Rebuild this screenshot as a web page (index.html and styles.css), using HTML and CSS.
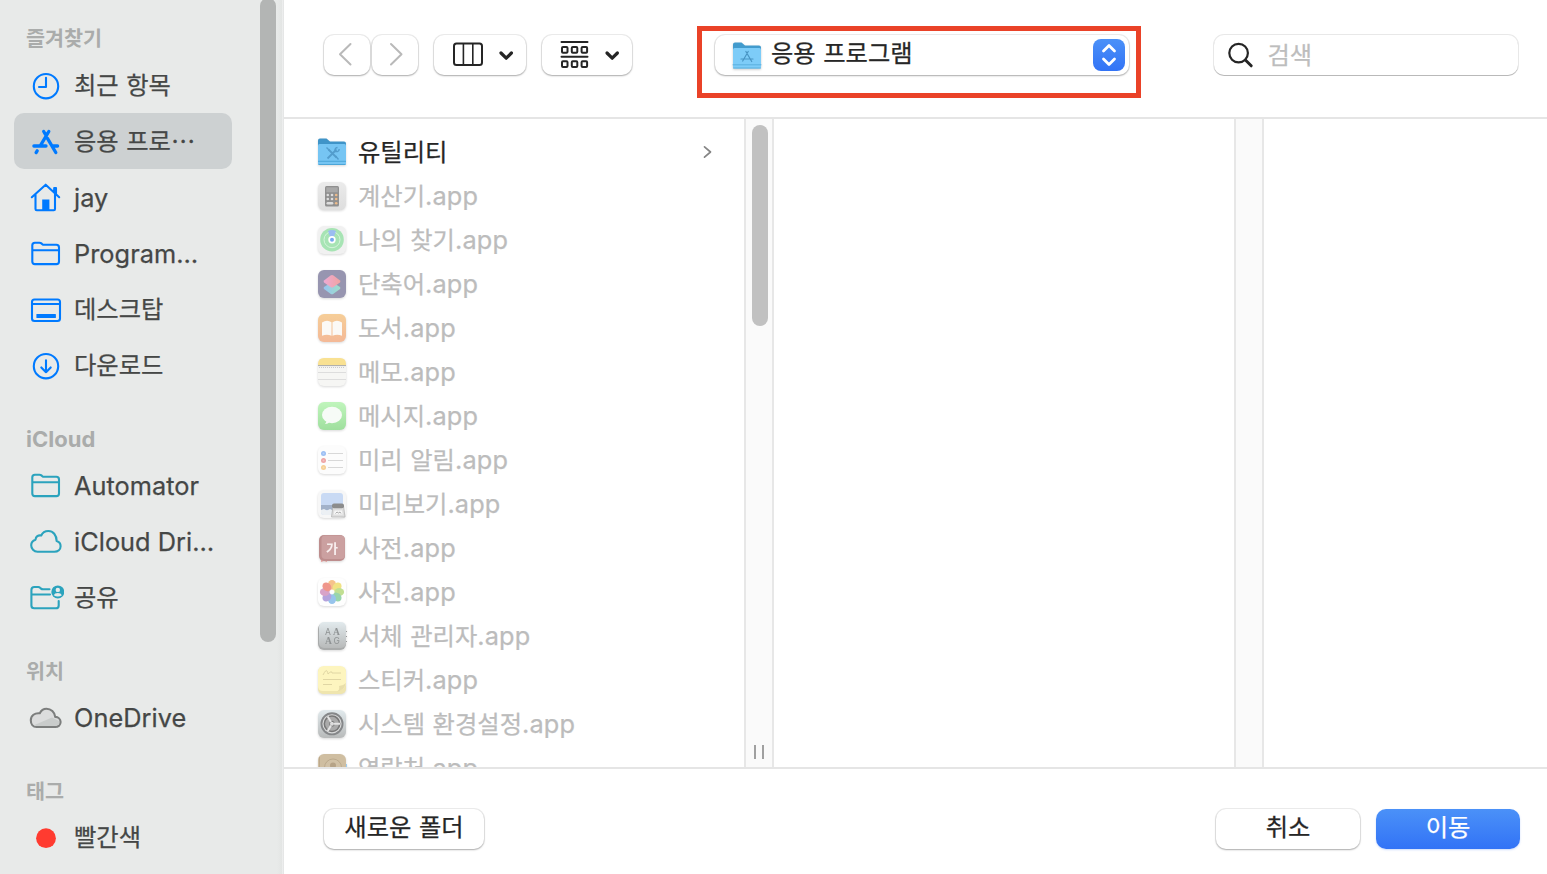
FILE: index.html
```html
<!DOCTYPE html>
<html lang="ko">
<head>
<meta charset="utf-8">
<title>응용 프로그램</title>
<link rel="stylesheet" href="styles.css">
</head>
<body>
<div class="dialog">
  <aside class="sidebar">
    <h2 class="heading first">즐겨찾기</h2>
    <div class="place"><svg class="glyph blue" viewBox="0 0 36 36"><circle cx="18" cy="18.200" r="12.200"/><path d="M18 9.800V19h-7"/></svg><span>최근 항목</span></div>
    <div class="place selected"><svg class="glyph blue heavy" viewBox="0 0 36 36"><path d="M20.800 7.500L12.400 21.600M15.700 7.500l2.200 3.600M19.600 14.600l8.200 13.900M5.900 22H18M24.400 22h5.200M9.200 26.800l-1.100 1.800"/></svg><span>응용 프로⋯</span></div>
    <div class="place"><svg class="glyph blue" viewBox="0 0 36 36"><path d="M3.800 17.200L17.700 4.700l13.500 12.500M7.500 14.500v14.500q0 1.200 1.200 1.200h17.100q1.200 0 1.200-1.200V14.500M26.200 12.500V8h1.800v6.500"/><path class="solid" d="M14.200 19.500h7.200v10.500h-7.200z"/></svg><span class="latin">jay</span></div>
    <div class="place"><svg class="glyph blue" viewBox="0 0 36 36"><path d="M4.300 25.500V9.300q0-2.600 2.600-2.600h4.600q1.100 0 1.900.7l.9.800q.7.600 1.800.600h12.300q2.600 0 2.600 2.600v14.100q0 2.600-2.600 2.600H6.900q-2.600 0-2.600-2.600zM4.300 14.200H31"/></svg><span class="latin">Program…</span></div>
    <div class="place"><svg class="glyph blue" viewBox="0 0 36 36"><rect x="4" y="7.500" width="28" height="21.500" rx="2.500"/><path d="M4.200 12h27.500"/><rect class="solid" x="8.400" y="22" width="19.500" height="4" rx=".6"/></svg><span>데스크탑</span></div>
    <div class="place"><svg class="glyph blue" viewBox="0 0 36 36"><circle cx="18" cy="18.200" r="12.200"/><path d="M18 12.200v12M13.300 19.400l4.700 4.800 4.700-4.800"/></svg><span>다운로드</span></div>

    <h2 class="heading latin-heading">iCloud</h2>
    <div class="place"><svg class="glyph teal" viewBox="0 0 36 36"><path d="M4.300 25.500V9.300q0-2.600 2.600-2.600h4.600q1.100 0 1.900.7l.9.800q.7.600 1.800.600h12.300q2.600 0 2.600 2.600v14.100q0 2.600-2.600 2.600H6.900q-2.600 0-2.600-2.600zM4.300 14.200H31"/></svg><span class="latin">Automator</span></div>
    <div class="place"><svg class="glyph teal" viewBox="0 0 36 36"><path d="M9.500 27.700h16.900c3.600 0 6.200-2.400 6.200-5.400 0-2.600-1.700-4.500-3.900-5.200C28.500 11 25.100 7 20.400 7c-3.300 0-6 1.700-7.200 4.500-3-.7-5.500 1.200-5.700 4.200-2.600.8-4.300 3-4.300 5.600 0 3.600 2.700 6.400 6.300 6.400z"/></svg><span class="latin">iCloud Dri…</span></div>
    <div class="place"><svg class="glyph teal" viewBox="0 0 36 36"><path d="M21.500 9.300h-6.500q-1.200 0-2-.7l-.9-.8Q11.300 7 10.300 7H6.300q-2.900 0-2.900 2.900v15.600q0 2.800 2.800 2.800h21.500q3 0 3-2.900V21M3.500 14.500h18.500"/><circle class="solid" cx="29.800" cy="11.900" r="6.500"/><circle class="hole" cx="29.800" cy="9.900" r="2.200"/><path class="hole" d="M25.700 15.300q1-2.400 4.100-2.400t4.100 2.400q-4.100 2.500-8.200 0z"/></svg><span>공유</span></div>

    <h2 class="heading">위치</h2>
    <div class="place"><svg class="glyph gray" viewBox="0 0 36 36"><path class="cloud" d="M8.500 27h18.700c3.100 0 5.400-2 5.400-4.900 0-3-2.300-5.100-5.400-5.200-.5-4.700-4.200-8.100-8.700-8.100-3.200 0-5.400 1.700-6.700 4.500-5-.7-9 2.300-9 6.900 0 4 2.200 6.800 5.700 6.800z"/><path class="shade" d="M6.500 25l17.500-7.500 7 3.500v3l-3 2H8z"/></svg><span class="latin">OneDrive</span></div>

    <h2 class="heading">태그</h2>
    <div class="place"><svg class="glyph" viewBox="0 0 36 36"><circle cx="18" cy="18.200" r="9.900" fill="#ff3b30"/></svg><span>빨간색</span></div>
    <div class="sidebar-thumb"></div>
  </aside>

  <main class="main">
    <header class="toolbar">
      <div class="button nav"><svg viewBox="0 0 46 40"><path d="M26.500 9L16 19.300 26.500 29.500"/></svg></div>
      <div class="button nav forward"><svg viewBox="0 0 46 40"><path d="M19 9l10.500 10.300L19 29.500"/></svg></div>
      <div class="button view"><svg viewBox="0 0 92 40"><rect x="20" y="8.500" width="28" height="21.500" rx="2.500"/><path class="fine" d="M29.400 9v21M38.800 9v21"/><path class="chevron" d="M67 18l5.200 5.200 5.200-5.200"/></svg></div>
      <div class="button group"><svg viewBox="0 0 90 40"><path d="M19.500 7h26M19.500 21.700h26"/><g><rect x="20" y="11.900" width="5.500" height="5.800" rx="1"/><rect x="29.800" y="11.900" width="5.500" height="5.800" rx="1"/><rect x="39.600" y="11.900" width="5.500" height="5.800" rx="1"/><rect x="20" y="26.300" width="5.500" height="5.800" rx="1"/><rect x="29.800" y="26.300" width="5.500" height="5.800" rx="1"/><rect x="39.600" y="26.300" width="5.500" height="5.800" rx="1"/></g><path class="chevron" d="M65 18l5.200 5.200 5.200-5.200"/></svg></div>
      <div class="button popup">
        <svg class="app" viewBox="0 0 32 32"><path d="M2 5.500q0-2 2-2h6.500l3.500 3h14q2 0 2 2V15H2z" fill="#429bcd"/><rect x="2" y="9" width="28" height="20.500" rx="1.500" fill="#7dccf8"/><path d="M2 25.800h28M2.500 29h27" stroke="#5ab0de" stroke-width="1"/><path d="M17.200 12.500l-5.500 9.500M14.900 12.500l5.800 10M10 20h12" fill="none" stroke="#4895c4" stroke-width="1.200"/></svg>
        <span>응용 프로그램</span>
        <svg class="stepper" viewBox="0 0 32 32"><path d="M10.500 12l5.500-5.500 5.500 5.500M10.500 20l5.500 5.500 5.500-5.500"/></svg>
        <div class="callout"></div>
      </div>
      <div class="button search"><svg viewBox="0 0 32 40"><circle cx="12.600" cy="18.100" r="9.300"/><path class="handle" d="M19.400 25l5.800 5.800"/></svg><span>검색</span></div>
    </header>

    <section class="columns">
      <div class="column files">
        <div class="file folder"><svg class="app" viewBox="0 0 32 32"><path d="M2 4.500q0-2 2-2h6.500l3.500 3h14q2 0 2 2V14H2z" fill="#3f94c8"/><rect x="2" y="8" width="28" height="21" rx="1.500" fill="#76c5f3"/><path d="M2 25.300h28M2.500 28.500h27" stroke="#4da6d8" stroke-width="1"/><path d="M12.500 13.500l8 8M20.500 13.500l-9 9" stroke="#539dcd" stroke-width="1.800"/><path d="M10.500 11.500l3 3M19 15.500q-.7-3.500 2.500-4M19.200 15.500q3.800.7 4-2.500M19.500 20l3 3.500" fill="none" stroke="#539dcd" stroke-width="1.400"/></svg><span>유틸리티</span><svg class="disclosure" viewBox="0 0 12 16"><path d="M2.500 2.800L8.500 8l-6 5.200"/></svg></div>
        <div class="file"><svg class="app" viewBox="0 0 32 32"><defs><linearGradient id="silver" x2="0" y2="1"><stop stop-color="#ebebeb"/><stop offset="1" stop-color="#dedede"/></linearGradient></defs><rect x="2" y="2" width="28" height="28" rx="6" fill="url(#silver)"/><rect x="9" y="6" width="14" height="20.500" rx="1.500" fill="#909090"/><rect x="10.300" y="7.300" width="11.400" height="5" fill="#a9a9a9"/><g fill="#ddd"><circle cx="11.800" cy="15" r="1.300"/><circle cx="16" cy="15" r="1.300"/><circle cx="11.800" cy="19" r="1.300"/><circle cx="16" cy="19" r="1.300"/><rect x="10.500" y="22" width="6.800" height="2.500" rx="1.200"/></g><g fill="#eebb8a"><circle cx="20.200" cy="15" r="1.300"/><circle cx="20.200" cy="19" r="1.300"/><circle cx="20.200" cy="23.200" r="1.300"/></g></svg><span>계산기<b class="latin">.app</b></span></div>
        <div class="file"><svg class="app" viewBox="0 0 32 32"><rect x="2" y="2" width="28" height="28" rx="6" fill="#f1f1f1"/><circle cx="16" cy="15.700" r="11.800" fill="#a7e4b4"/><circle cx="16" cy="15.700" r="8" fill="none" stroke="#d5f4dc"/><path d="M12 7q4-2 8 0l-2.500 7h-3z" fill="#9bbdf1"/><circle cx="16" cy="15.700" r="3.700" fill="#fff"/><circle cx="16" cy="15.700" r="2" fill="#76a8ef"/></svg><span>나의 찾기<b class="latin">.app</b></span></div>
        <div class="file"><svg class="app" viewBox="0 0 32 32"><defs><linearGradient id="shortTop"><stop stop-color="#edaad4"/><stop offset="1" stop-color="#f1a3a1"/></linearGradient><linearGradient id="shortLow"><stop stop-color="#98c4f2"/><stop offset="1" stop-color="#9edec7"/></linearGradient></defs><rect x="2" y="2" width="28" height="28" rx="6" fill="#9795b0"/><path d="M8 19l8-5 8 5q.8 1 0 2l-6.500 4.700q-1.500 1-3 0L8 21q-.8-1 0-2z" fill="url(#shortLow)"/><path d="M8 12.500l6.500-5q1.500-1 3 0l6.500 5q.8 1 0 2L17.500 19q-1.500 1-3 0L8 14.500q-.8-1 0-2z" fill="url(#shortTop)"/></svg><span>단축어<b class="latin">.app</b></span></div>
        <div class="file"><svg class="app" viewBox="0 0 32 32"><defs><linearGradient id="books" x2="0" y2="1"><stop stop-color="#f6ce98"/><stop offset="1" stop-color="#f4b997"/></linearGradient></defs><rect x="2" y="2" width="28" height="28" rx="6" fill="url(#books)"/><path d="M6 10.500q5-3.500 9.500-.3v13.500q-4.500-2-9.500 0zM16.500 10.200q4.500-3.200 9.500.3v13.200q-5-2-9.500 0z" fill="#fbf9f6"/></svg><span>도서<b class="latin">.app</b></span></div>
        <div class="file"><svg class="app" viewBox="0 0 32 32"><rect x="2" y="2" width="28" height="28" rx="6" fill="#f6f6f4"/><path d="M2 9.500V8q0-6 6-6h16q6 0 6 6v1.500z" fill="#f9e192"/><path d="M2 9.600h28" stroke="#aaa"/><path d="M3 11.500h26" stroke="#ccc" stroke-dasharray="1 1"/><path d="M2 16.500h28M2 23.500h28" stroke="#ddd"/></svg><span>메모<b class="latin">.app</b></span></div>
        <div class="file"><svg class="app" viewBox="0 0 32 32"><defs><linearGradient id="mint" x2="0" y2="1"><stop stop-color="#c0f5bc"/><stop offset="1" stop-color="#9fdf9e"/></linearGradient></defs><rect x="2" y="2" width="28" height="28" rx="6" fill="url(#mint)"/><ellipse cx="16" cy="15" rx="10" ry="8.200" fill="#f7fbf7"/><path d="M10.500 20q.3 2.500-1.500 4 3 0 5-2.500" fill="#f7fbf7"/></svg><span>메시지<b class="latin">.app</b></span></div>
        <div class="file"><svg class="app" viewBox="0 0 32 32"><rect x="2" y="2" width="28" height="28" rx="6" fill="#fcfcfc"/><path d="M12 9.500h15M12 16.500h15M12 23.500h15" stroke="#d8d8d8"/><circle cx="7.500" cy="9.500" r="2.500" fill="#9bbff4"/><circle cx="7.500" cy="16.500" r="2.500" fill="#eea5a5"/><circle cx="7.500" cy="23.500" r="2.500" fill="#f6cf94"/><g fill="#fff" opacity=".3"><circle cx="7.500" cy="9.500" r="1"/><circle cx="7.500" cy="16.500" r="1"/><circle cx="7.500" cy="23.500" r="1"/></g></svg><span>미리 알림<b class="latin">.app</b></span></div>
        <div class="file"><svg class="app" viewBox="0 0 32 32"><rect x="2" y="2" width="28" height="28" rx="6" fill="#f7f7f7"/><rect x="5" y="5" width="22" height="22" rx="3" fill="#c9daf4"/><path d="M5 17h22v5H5z" fill="#a3b2c9"/><path d="M5 22l3-1 3 1.500 3-1.500 4 2v4H8q-3 0-3-3z" fill="#ecf0f4"/><path d="M17 18h10.500l1.500 11H15.500z" fill="#dedede" stroke="#b5b5b5" stroke-width=".8"/><rect x="16" y="15.500" width="12" height="4.800" rx="2" fill="#8c8c8c"/><path d="M18.500 22.500h7.500l.7 4h-9z" fill="#f6f6f6"/><path d="M19.500 25.500l1.500-1.500 1.500 1 1.500-1 1 1.500" fill="none" stroke="#999" stroke-width=".8"/></svg><span>미리보기<b class="latin">.app</b></span></div>
        <div class="file"><svg class="app" viewBox="0 0 32 32"><path d="M5 26h6v4l-3-1-3 1z" fill="#e7a19e"/><rect x="3" y="3" width="26" height="26" rx="5" fill="#bd8d8d"/><rect x="5.500" y="3.500" width="23.300" height="23.500" rx="4" fill="#cba0a0"/><text class="dict" x="10" y="20.500">가</text></svg><span>사전<b class="latin">.app</b></span></div>
        <div class="file"><svg class="app" viewBox="0 0 32 32"><rect x="2" y="2" width="28" height="28" rx="6" fill="#fefefe"/><g class="petals"><ellipse cx="16" cy="8.800" rx="4" ry="4.900" fill="#f6b978"/><ellipse cx="16" cy="8.800" rx="4" ry="4.900" fill="#f0de70" transform="rotate(45 16 16)"/><ellipse cx="16" cy="8.800" rx="4" ry="4.900" fill="#b8db80" transform="rotate(90 16 16)"/><ellipse cx="16" cy="8.800" rx="4" ry="4.900" fill="#87cfa0" transform="rotate(135 16 16)"/><ellipse cx="16" cy="8.800" rx="4" ry="4.900" fill="#86bbea" transform="rotate(180 16 16)"/><ellipse cx="16" cy="8.800" rx="4" ry="4.900" fill="#a894d8" transform="rotate(225 16 16)"/><ellipse cx="16" cy="8.800" rx="4" ry="4.900" fill="#d294c0" transform="rotate(270 16 16)"/><ellipse cx="16" cy="8.800" rx="4" ry="4.900" fill="#ee8578" transform="rotate(315 16 16)"/></g></svg><span>사진<b class="latin">.app</b></span></div>
        <div class="file"><svg class="app" viewBox="0 0 32 32"><defs><linearGradient id="steel" x2="0" y2="1"><stop stop-color="#e2eaed"/><stop offset="1" stop-color="#b8baba"/></linearGradient></defs><rect x="2" y="3" width="28" height="27" rx="6" fill="#a9abab"/><rect x="3" y="2" width="27" height="26" rx="5" fill="url(#steel)"/><path d="M30.500 11v14" stroke="#999" stroke-dasharray="1 4"/><text class="type" x="9" y="15">A</text><text class="type serif" x="17" y="15">A</text><text class="type serif" x="9" y="23.500">A</text><text class="type" x="17.500" y="23.500">G</text></svg><span>서체 관리자<b class="latin">.app</b></span></div>
        <div class="file"><svg class="app" viewBox="0 0 32 32"><rect x="2" y="3" width="28" height="27" rx="5" fill="#efe5ae"/><path d="M2 8q0-6 6-6h16q6 0 6 6v12q-2 6-8 7H7q-5 0-5-5z" fill="#fdf5bf"/><path d="M30 19q-3 3-7 3 1 4-2 5.500 7-.5 9-8.500z" fill="#e8deaa"/><path d="M7 11q3-6 4-4t1 3q4-4 4-1h9M7 15.500h18M7 20.500h9" fill="none" stroke="#e0d6a4"/></svg><span>스티커<b class="latin">.app</b></span></div>
        <div class="file"><svg class="app" viewBox="0 0 32 32"><rect x="2" y="2" width="28" height="28" rx="6" fill="url(#steel)"/><circle cx="16" cy="15.800" r="11.500" fill="#858789"/><circle cx="16" cy="15.800" r="9.600" fill="#d8d9d9"/><circle cx="16" cy="15.800" r="7.700" fill="#aaa" stroke="#777" stroke-width="1.500"/><circle cx="16" cy="15.800" r="2.500" fill="#ddd" stroke="#777"/><path d="M18 15.800h6M15 14l-3.300-5.400M15 17.600l-3.300 5.400" stroke="#e4e4e4" stroke-width="2"/></svg><span>시스템 환경설정<b class="latin">.app</b></span></div>
        <div class="file"><svg class="app" viewBox="0 0 32 32"><path d="M30 12v8" stroke="#9ccdf1" stroke-width="2"/><rect x="2" y="2" width="28" height="28" rx="6" fill="#cfbea1"/><path d="M3.500 5v22" stroke="#bda98b"/><circle cx="17" cy="15.500" r="8.500" fill="#d1c1a6" stroke="#bcaa8d"/><circle cx="17" cy="13.500" r="3" fill="#b6a387"/></svg><span>연락처<b class="latin">.app</b></span></div>
      </div>
      <div class="gutter"><div class="thumb"></div><div class="grip"></div></div>
      <div class="column"></div>
      <div class="gutter"></div>
      <div class="column last"></div>
    </section>

    <footer class="actions">
      <div class="button new-folder">새로운 폴더</div>
      <div class="button cancel">취소</div>
      <div class="button go">이동</div>
    </footer>
  </main>
</div>
</body>
</html>
```
FILE: styles.css
```css
* { box-sizing: border-box; }
body {
  margin: 0;
  overflow: hidden;
  background: #fff;
  font-family: Inter, "Noto Sans CJK KR", sans-serif;
  font-size: 24.3px;
  word-spacing: 0.7px;
  color: #262626;
  -webkit-text-stroke: 0.25px currentColor;
}
svg { display: block; flex: none; }
.dialog { display: flex; width: 1547px; height: 874px; }
.latin { font-size: 25.3px; font-weight: 400; letter-spacing: 0.15px; }

.sidebar {
  position: relative;
  flex: none;
  width: 284px;
  height: 874px;
  padding-right: 52px;
  overflow: hidden;
  background: linear-gradient(90deg, #e8eae9 277px, #e3e5e4 282px, #f0f1f1 282px, #e2e3e3 284px);
  color: #454746;
}
.heading {
  margin: 0;
  height: 64px;
  padding: 28px 0 0 26px;
  font-size: 20.7px;
  line-height: 38px;
  font-weight: 700;
  color: #aaacab;
  -webkit-text-stroke: 0;
}
.heading.first { height: 57px; padding-top: 20px; }
.latin-heading { font-size: 22px; line-height: 36px; }
.place {
  display: flex;
  align-items: center;
  height: 56px;
  padding-left: 28px;
  line-height: 58px;
  white-space: nowrap;
}
.place .latin { padding-top: 2px; letter-spacing: 0.05px; word-spacing: 0; }
.place.selected { margin-left: 14px; padding-left: 14px; border-radius: 10px; background: #cdd1d2; }
.glyph { width: 36px; height: 36px; margin: 1px 10.5px 0 -0.5px; fill: none; stroke-width: 2.1; stroke-linecap: round; stroke-linejoin: round; }
.blue { stroke: #007aff; color: #007aff; }
.teal { stroke: #2ba3bd; color: #2ba3bd; }
.gray { stroke: #7c7e7d; }
.heavy { stroke-width: 3.3; }
.solid { fill: currentColor; stroke: none; }
.hole { fill: #e8eae9; stroke: none; }
.cloud { fill: #dcdddd; }
.shade { fill: #c9cccb; stroke: none; }
.sidebar-thumb { position: absolute; left: 260px; top: -2px; width: 16px; height: 644px; border-radius: 8px; background: #b3b5b4; }

.main { flex: 1; min-width: 0; display: flex; flex-direction: column; }
.toolbar { display: flex; flex: none; height: 119px; padding: 35px 29px 0 40px; border-bottom: 2px solid #e5e5e5; }
.button {
  flex: none;
  height: 40px;
  border-radius: 10px;
  background: #fff;
  box-shadow: 0 0 0 1px rgba(0,0,0,.07), 0 1px 2px rgba(0,0,0,.28);
  line-height: 37px;
}
.button > svg { height: 40px; fill: none; stroke: #252525; stroke-width: 2; stroke-linecap: round; stroke-linejoin: round; }
.nav { width: 46px; }
.nav > svg { width: 46px; stroke: #b9b9b9; }
.forward { margin-left: 2px; }
.view { width: 92px; margin-left: 16px; }
.group { width: 90px; margin-left: 16px; }
.button .chevron { stroke-width: 3.2; }
.button .fine { stroke-width: 1.6; }
.popup { position: relative; display: flex; width: 414px; margin-left: 83px; padding: 0 4px 0 16px; }
.popup > .app { width: 32px; height: 32px; margin: 4px 8px 0 0; stroke: none; filter: drop-shadow(0 1px 1px rgba(0,0,0,.2)); }
.popup > .stepper { width: 32px; height: 32px; margin: 4px 0 0 auto; border-radius: 8px; background: linear-gradient(#4b91f8, #3273f6); stroke: #fff; stroke-width: 2.8; }
.callout { position: absolute; left: -18px; top: -9px; width: 444px; height: 72px; border: 5px solid #ea4228; }
.search { display: flex; width: 304px; margin-left: auto; padding-left: 12px; line-height: 41px; color: #bdbdbd; box-shadow: 0 0 0 1px rgba(0,0,0,.09), 0 1px 0 rgba(0,0,0,.2); }
.search > svg { width: 32px; margin-right: 9.5px; stroke-width: 2.2; }
.search .handle { stroke-width: 3; }

.columns { display: flex; flex: none; height: 648px; overflow: hidden; }
.column { flex: none; width: 460px; }
.column.last { flex: 1; }
.files { padding: 11px 0 0 32px; color: #bcbcbc; overflow: hidden; }
.file { display: flex; align-items: center; height: 44px; line-height: 44px; white-space: nowrap; }
.file .app { width: 32px; height: 32px; margin-right: 10px; filter: drop-shadow(0 1px 1px rgba(0,0,0,.15)); -webkit-text-stroke: 0; }
.folder { color: #262626; line-height: 42px; }
.disclosure { width: 12px; height: 16px; margin: 0 30px 0 auto; fill: none; stroke: #858585; stroke-width: 1.7; stroke-linecap: round; stroke-linejoin: round; }
.dict { font: 700 13px "Noto Sans CJK KR", sans-serif; fill: #f8eeee; }
.petals { mix-blend-mode: multiply; opacity: .85; }
.type { font: 8.5px Inter, sans-serif; fill: #8e9293; }
.type.serif { font-family: "Liberation Serif", serif; font-weight: 700; font-size: 9.5px; }
.gutter {
  display: flex;
  flex: none;
  flex-direction: column;
  justify-content: space-between;
  width: 30px;
  padding: 6px 0 8px 6px;
  border: solid #e7e7e7;
  border-width: 0 2px;
  background: #fafafa;
}
.thumb { width: 16px; height: 201px; border-radius: 8px; background: #c1c1c1; }
.grip { width: 10px; height: 14px; margin-left: 2px; border: solid #a0a0a0; border-width: 0 2px; }

.actions { display: flex; flex: 1; padding: 40px 27px 0 40px; border-top: 2px solid #e5e5e5; text-align: center; }
.new-folder { width: 160px; }
.cancel { width: 144px; margin-left: auto; }
.go { width: 144px; margin-left: 16px; color: #fff; background: linear-gradient(#4b91f8, #3273f6); box-shadow: 0 1px 2px rgba(50,115,246,.25); }
```
